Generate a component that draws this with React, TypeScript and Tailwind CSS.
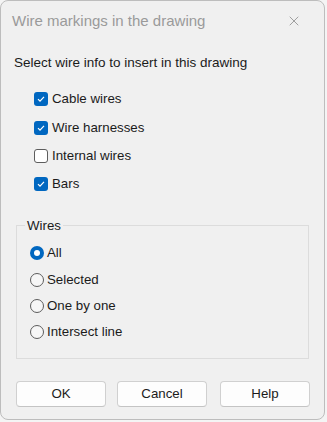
import { X } from 'lucide-react'

const checks = [
  { label: 'Cable wires', on: true },
  { label: 'Wire harnesses', on: true },
  { label: 'Internal wires', on: false },
  { label: 'Bars', on: true },
]

const radios = ['All', 'Selected', 'One by one', 'Intersect line']

function CheckBox({ on }: { on: boolean }) {
  if (!on)
    return <span className="w-[14px] h-[14px] rounded-[3px] border border-[#5d5d5d] bg-white shrink-0" />
  return (
    <span className="w-[14px] h-[14px] rounded-[3px] bg-[#0067c0] shrink-0 flex items-center justify-center">
      <svg width="10" height="10" viewBox="0 0 10 10">
        <path d="M2 5.2 L4 7.2 L8 2.8" fill="none" stroke="white" strokeWidth="1.2" />
      </svg>
    </span>
  )
}

function Radio({ on }: { on: boolean }) {
  if (on)
    return (
      <span className="w-[14px] h-[14px] rounded-full bg-[#0067c0] shrink-0 flex items-center justify-center">
        <span className="w-[6px] h-[6px] rounded-full bg-white" />
      </span>
    )
  return <span className="w-[14px] h-[14px] rounded-full border border-[#5d5d5d] bg-white/40 shrink-0" />
}

export default function App() {
  return (
    <div className="w-[327px] h-[422px] bg-[#f4f4f4]" style={{ fontFamily: '"Liberation Sans", Arial, sans-serif' }}>
      <div className="w-[325px] h-[420px] bg-[#f0f0f0] rounded-[8px] border border-[#bdbdbd] flex flex-col">
        <div className="h-[40px] flex items-center justify-between pl-[11px] pr-[22px] rounded-t-[8px]">
          <span className="text-[15px] text-[#9a9a9a]">Wire markings in the drawing</span>
          <X size={16} strokeWidth={1.2} className="text-[#8a8a8a]" />
        </div>
        <div className="px-[13px] pt-[12px] text-[13.5px] text-[#1b1b1b]">Select wire info to insert in this drawing</div>
        <div className="flex flex-col gap-[14.3px] pl-[33px] pt-[19px]">
          {checks.map((c) => (
            <div key={c.label} className="flex items-center gap-[4px] h-[14px] text-[13.3px] text-[#1b1b1b]">
              <CheckBox on={c.on} />
              <span>{c.label}</span>
            </div>
          ))}
        </div>
        <div className="mx-[15px] mt-[34px] h-[134px] border border-[#dcdcdc] relative">
          <span className="absolute -top-[10px] left-[8px] px-[2px] bg-[#f0f0f0] text-[13.3px] text-[#1b1b1b]">Wires</span>
          <div className="flex flex-col gap-[12.4px] pl-[13px] pt-[20px]">
            {radios.map((r, i) => (
              <div key={r} className="flex items-center gap-[3px] h-[14px] text-[13.3px] text-[#1b1b1b]">
                <Radio on={i === 0} />
                <span>{r}</span>
              </div>
            ))}
          </div>
        </div>
        <div className="flex pl-[15px] pt-[22px] gap-[11px]">
          {['OK', 'Cancel', 'Help'].map((b, i) => (
            <button
              key={b}
              className={`h-[26px] w-[90px] rounded-[4px] border border-[#d0d0d0] border-b-[#c4c4c4] bg-[#fdfdfd] text-[13.3px] text-[#1b1b1b] ${i === 2 ? 'ml-[2px]' : ''}`}
            >
              {b}
            </button>
          ))}
        </div>
      </div>
    </div>
  )
}
